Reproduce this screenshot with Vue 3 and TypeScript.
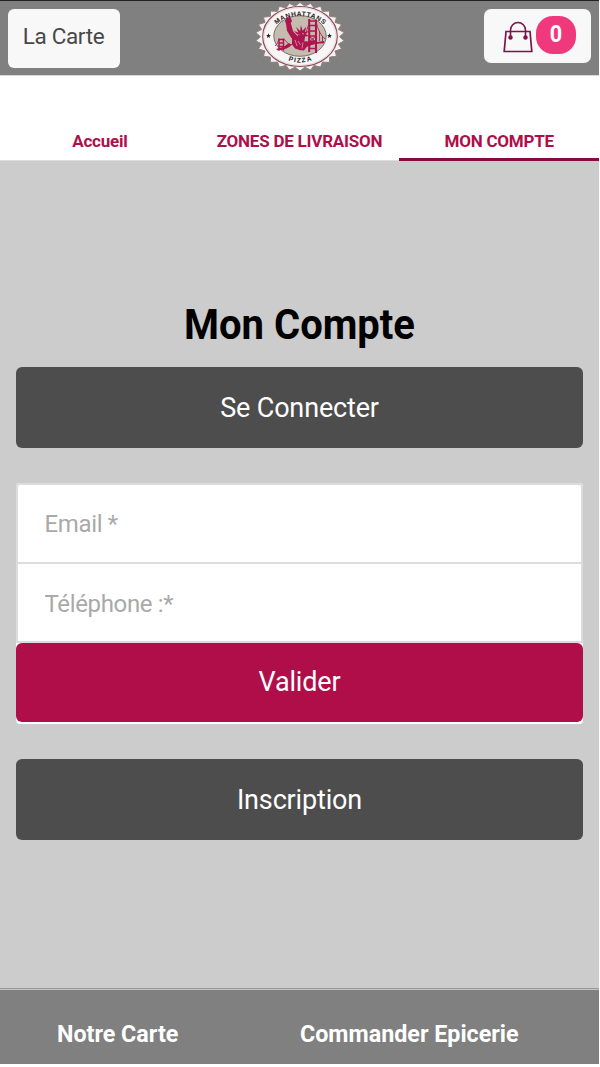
<template>
  <div class="page">
    <header class="header">
      <button class="header__menu" type="button">La Carte</button>
      <svg class="header__logo" viewBox="0 0 90 70" aria-label="Manhattans Pizza">
        <defs>
          <path id="logo-top" d="M 16 35 A 29 21 0 0 1 74 35" />
          <path id="logo-bottom" d="M 15 34.5 A 30 26 0 0 0 75 34.5" />
        </defs>
        <polygon :points="burst" fill="#f7f2f1" stroke="#8d8478" stroke-width="1" />
        <ellipse cx="45" cy="34.5" rx="37.3" ry="30" fill="#f8f5f5" stroke="#8c4862" stroke-width="1.2" />
        <ellipse cx="45" cy="34.5" rx="36" ry="28.8" fill="none" stroke="#d9cfca" stroke-width=".7" />
        <ellipse cx="45" cy="34" rx="26.2" ry="20.3" fill="#c5bcaf" stroke="#6a625e" stroke-width=".9" />
        <g fill="#ae1550">
          <!-- torch and arm -->
          <path d="M30 19l1.500-3.500h4l1.500 3.500-1.200 2.200 2.400 8.300 6 6.300-2 5-6-5-4.200-7-1-7z" />
          <!-- crown and head -->
          <path d="M43 33l-4.200-4 4.500 1.500-2.200-5.500 4 4 .8-6 1.700 5.700 3.800-4.200-1.500 5.500 4.700-1.300-3.900 3.300 3.500 1.900-4.100.6-.8 5-4 1.400-3-2.700z" />
          <!-- robe -->
          <path d="M37 36l4-1 5 4 7 .5 6-1.500 2 1.500-3 3-6 2-3 4q-5 0-9-2l-3-4z" />
          <!-- deck -->
          <path d="M21 47q8-1.500 12-5.500l4 1q-4 5-14 6zM49 42.500q10-2.500 20-3.500v2.200q-10 0-19 4z" />
        </g>
        <g fill="none" stroke="#ae1550">
          <path d="M24 36.500v12M28.500 36.500v12" stroke-width="1.500" />
          <path d="M24 37.500h4.500M24 41h4.500M24 44.500h4.500" stroke-width="1.300" />
          <path d="M54.200 17v33M61 18v33" stroke-width="2.100" />
          <path d="M54 19h7M54 23.500h7M54 29h7M54 34h7M54 46.500h7" stroke-width="1.400" />
          <path d="M61 20q3 12 9 17M64.500 29v10M67.500 34v6M53.500 23q-2 8-5 12M29 37q3 5 8 6M24 37q-1 5-4 7" stroke-width=".8" />
          <path d="M54 34l7 6M61 34l-7 6" stroke-width="1" />
        </g>
        <path d="M43.500 32l1 1M47 31.500l2 .5M43 39l2.500 4M48 40.500l-1 6M40 38l2 6" fill="none" stroke="#c5bcaf" stroke-width=".7" />
        <path :d="star(13.5)" fill="#252021" />
        <path :d="star(74.5)" fill="#252021" />
        <text class="logo-text"><textPath href="#logo-top" startOffset="50%" text-anchor="middle" textLength="51">MANHATTANS</textPath></text>
        <text class="logo-text"><textPath href="#logo-bottom" startOffset="50%" text-anchor="middle" textLength="24">PIZZA</textPath></text>
      </svg>
      <button class="header__cart" type="button">
        <svg class="header__bag" viewBox="0 0 30 32">
          <path d="M3 10.500h24l1.800 20H1.200z" fill="none" stroke="#7e124a" stroke-width="1.700" />
          <path d="M7.500 16V9a7.500 7.500 0 0 1 15 0v7" fill="none" stroke="#7e124a" stroke-width="1.600" />
          <circle cx="7.500" cy="16.500" r="2.200" fill="#7e124a" />
          <circle cx="22.500" cy="16.500" r="2.200" fill="#7e124a" />
        </svg>
        <span class="header__count"><b class="header__number">{{ count }}</b></span>
      </button>
    </header>

    <nav class="tabs">
      <a
        v-for="tab in tabs"
        :key="tab"
        class="tabs__item"
        :class="{ 'tabs__item--active': tab === activeTab }"
        @click="activeTab = tab"
      >{{ tab }}</a>
    </nav>

    <main class="account">
      <h1 class="account__title">Mon Compte</h1>
      <button class="account__button" type="button">Se Connecter</button>
      <form class="form" @submit.prevent>
        <input v-model="email" class="form__field" type="text" placeholder="Email *" />
        <input v-model="phone" class="form__field" type="tel" placeholder="Téléphone :*" />
        <button class="form__submit" type="submit">Valider</button>
      </form>
      <button class="account__button" type="button">Inscription</button>
    </main>

    <footer class="footer">
      <a class="footer__link">Notre Carte</a>
      <a class="footer__link">Commander Epicerie</a>
    </footer>
  </div>
</template>

<script setup lang="ts">
import { ref } from 'vue';

const tabs = ['Accueil', 'ZONES DE LIVRAISON', 'MON COMPTE'];
const activeTab = ref('MON COMPTE');
const count = ref(0);
const email = ref('');
const phone = ref('');

// zigzag edge of the badge
const teeth = 26;
const burst = Array.from({ length: teeth * 2 }, (_, i) => {
  const angle = (i * Math.PI) / teeth - Math.PI / 2;
  const rx = i % 2 ? 39.5 : 44.5;
  const ry = i % 2 ? 30.8 : 34.3;
  return `${(45 + rx * Math.cos(angle)).toFixed(2)},${(34.7 + ry * Math.sin(angle)).toFixed(2)}`;
}).join(' ');

const star = (x: number) =>
  `M${x} 31.300l.7 1.600 1.700.1-1.300 1.200.4 1.800-1.500-1-1.500 1 .4-1.800-1.300-1.200 1.700-.1z`;
</script>

<style>
body {
  margin: 0;
  background: #fff;
}
</style>

<style scoped>
.page {
  display: flex;
  flex-direction: column;
  box-sizing: border-box;
  width: 599px;
  height: 1067px;
  padding-bottom: 3px;
  font-family: Roboto, "Liberation Sans", sans-serif;
}

button {
  margin: 0;
  padding: 0;
  border: none;
  font-family: inherit;
  cursor: pointer;
}

.header {
  display: flex;
  justify-content: space-between;
  align-items: flex-start;
  box-sizing: border-box;
  height: 76px;
  padding: 0 8px;
  border-top: 1px solid #252122;
  border-bottom: 1px solid #d8d8d8;
  background: #808080;
}

.header__menu {
  width: 112px;
  height: 59px;
  margin-top: 8px;
  padding: 0 1px 5px 0;
  border-radius: 6px;
  background: #f8f8f8;
  color: #484848;
  font-size: 22.5px;
  letter-spacing: -0.35px;
}

.header__logo {
  width: 90px;
  height: 70px;
  margin: 1px 0 0 -4px;
}

.logo-text {
  font-family: "Liberation Sans", sans-serif;
  font-size: 6.6px;
  font-weight: 700;
  fill: #252021;
}

.header__cart {
  display: flex;
  align-items: flex-start;
  box-sizing: border-box;
  width: 107px;
  height: 54px;
  margin-top: 8px;
  padding: 7px 0 0 18px;
  border-radius: 7px;
  background: #f8f8f8;
}

.header__bag {
  width: 30px;
  height: 32px;
  margin: 5px 3px 0 1px;
}

.header__count {
  width: 40px;
  height: 38px;
  border-radius: 17px;
  background: #f0397c;
  color: #fff;
  font-size: 24px;
  line-height: 36px;
}

.header__number {
  display: inline-block;
  transform: scaleX(0.9);
}

.tabs {
  display: flex;
  box-sizing: border-box;
  height: 85px;
  padding-top: 44px;
  background: #fff;
}

.tabs__item {
  flex: 1;
  box-sizing: border-box;
  height: 41px;
  border-bottom: 1px solid #dedede;
  color: #b00e49;
  font-size: 17px;
  font-weight: 700;
  letter-spacing: -0.22px;
  line-height: 43px;
  text-align: center;
  white-space: nowrap;
  cursor: pointer;
}

.tabs__item--active {
  border-bottom: 3px solid #850b41;
}

.account {
  flex: 1;
  display: flex;
  flex-direction: column;
  padding: 139px 16px 0;
  background: #ccc;
}

.account__title {
  margin: 0 0 18px;
  color: #000;
  font-size: 42px;
  font-weight: 700;
  line-height: 49px;
  text-align: center;
  transform: scaleX(0.952);
}

.account__button {
  height: 81px;
  border-radius: 6px;
  background: #4d4d4d;
  color: #fff;
  font-size: 27px;
  letter-spacing: -0.16px;
}

.form {
  display: flex;
  flex-direction: column;
  margin: 35px 0;
  border-radius: 4px;
  background: #fff;
}

.form__field {
  box-sizing: border-box;
  height: 80px;
  padding: 0 27px 0 26.5px;
  border: 2px solid #dcdcdc;
  border-bottom-width: 1px;
  border-radius: 4px 4px 0 0;
  background: #fff;
  font-family: inherit;
  font-size: 24px;
  letter-spacing: -0.35px;
  outline: none;
}

.form__field + .form__field {
  border-top-width: 1px;
  border-bottom-width: 2px;
  border-radius: 0;
  padding-top: 2px;
}

.form__field::placeholder {
  color: #a9a9a9;
  opacity: 1;
}

.form__submit {
  height: 79px;
  margin-bottom: 2px;
  padding-bottom: 2px;
  border-radius: 6px;
  background: #b00e49;
  color: #fff;
  font-size: 27px;
  letter-spacing: -0.16px;
}

.footer {
  display: flex;
  box-sizing: border-box;
  height: 76px;
  padding: 11px 0 0 57px;
  border-top: 1px solid #999;
  background: #808080;
  box-shadow: inset 0 1px #c4c4c4;
}

.footer__link {
  width: 243px;
  color: #fff;
  font-size: 24px;
  font-weight: 700;
  line-height: 68px;
  white-space: nowrap;
  transform: scaleX(0.97);
  transform-origin: left;
}
</style>
